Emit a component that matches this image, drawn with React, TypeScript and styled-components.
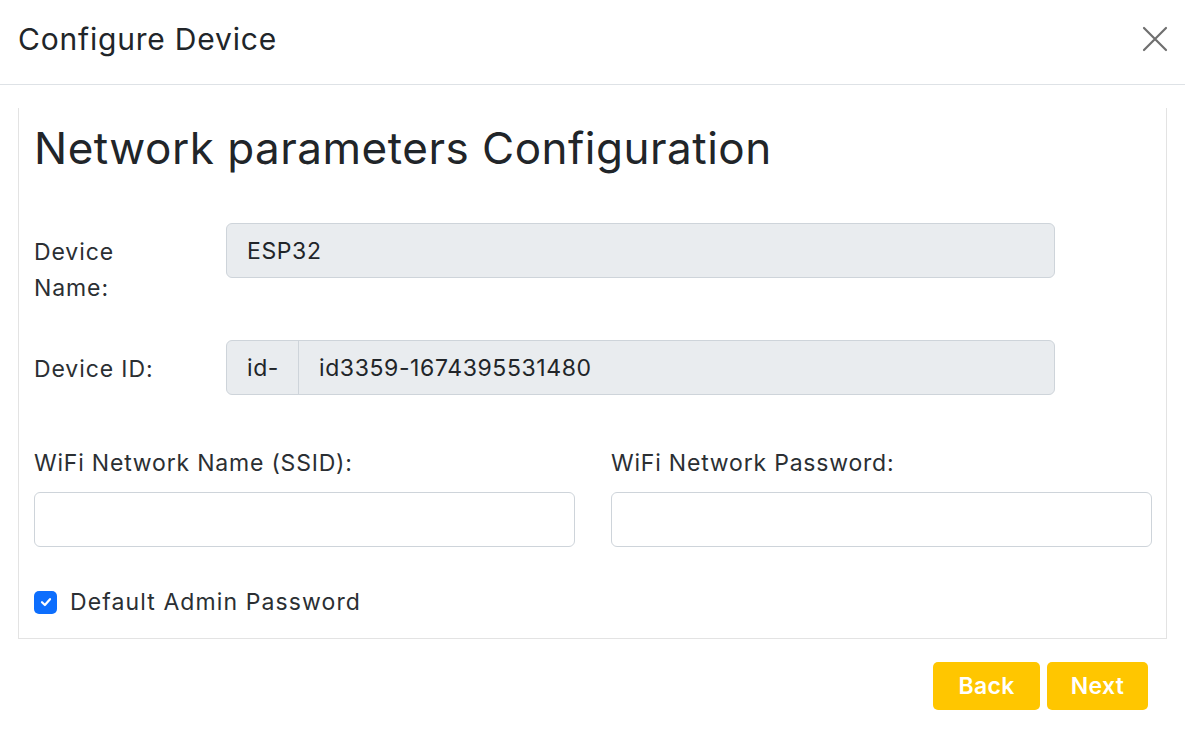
import React from "react";
import styled, { createGlobalStyle } from "styled-components";

const GlobalStyle = createGlobalStyle`
  html, body {
    margin: 0;
    padding: 0;
    background: #ffffff;
  }
  body {
    font-family: Inter, "Open Sans", sans-serif;
    color: #212529;
  }
`;

const Modal = styled.div`
  width: 1185px;
  min-height: 745px;
  background: #fff;
`;

const Header = styled.div`
  display: flex;
  align-items: center;
  justify-content: space-between;
  height: 85px;
  box-sizing: border-box;
  padding: 0 17px 6px 18px;
  border-bottom: 1px solid #dee2e6;
`;

const Title = styled.h5`
  margin: 0;
  font-size: 30px;
  font-weight: 400;
  letter-spacing: 0.8px;
  line-height: 45px;
  color: #212529;
`;

const CloseButton = styled.button`
  border: none;
  background: none;
  padding: 0;
  width: 26px;
  height: 26px;
  display: flex;
  cursor: pointer;
`;

const Body = styled.div`
  padding: 23px 18px 0 18px;
`;

const Card = styled.div`
  border: 1px solid #e3e3e3;
  border-top: none;
  padding: 13px 14px 18px 15px;
`;

const Heading = styled.h2`
  margin: 0 0 47px 0;
  font-size: 44px;
  font-weight: 400;
  letter-spacing: 0.5px;
  line-height: 55px;
  color: #212529;
`;

const Row = styled.div<{ $gap: number }>`
  display: grid;
  grid-template-columns: 192px 829px;
  align-items: start;
  margin-bottom: ${(p) => p.$gap}px;
`;

const Label = styled.label`
  display: block;
  width: 140px;
  padding-top: 11px;
  font-size: 23px;
  letter-spacing: 0.9px;
  line-height: 36px;
  color: #2b2f33;
`;

const Field = styled.div<{ $disabled?: boolean }>`
  display: flex;
  height: 55px;
  box-sizing: border-box;
  border: 1px solid #ced4da;
  border-radius: 6px;
  background: ${(p) => (p.$disabled ? "#e9ecef" : "#fff")};
  overflow: hidden;
`;

const FieldText = styled.div`
  display: flex;
  align-items: center;
  padding: 0 20px;
  font-size: 23px;
  letter-spacing: 0.6px;
  color: #212529;
`;

const Addon = styled(FieldText)`
  border-right: 1px solid #ced4da;
  width: 72px;
  box-sizing: border-box;
`;

const Columns = styled.div`
  display: grid;
  grid-template-columns: 1fr 1fr;
  column-gap: 36px;
  margin-bottom: 37px;
`;

const StackLabel = styled.label`
  display: block;
  font-size: 23px;
  letter-spacing: 0.8px;
  line-height: 36px;
  color: #2b2f33;
  margin-bottom: 11px;
`;

const CheckRow = styled.label`
  display: flex;
  align-items: center;
  gap: 13px;
  font-size: 23px;
  letter-spacing: 1.1px;
  line-height: 36px;
  color: #2b2f33;
`;

const CheckBox = styled.span`
  width: 23px;
  height: 23px;
  border-radius: 5px;
  background: #0d6efd;
  display: flex;
  align-items: center;
  justify-content: center;
`;

const Footer = styled.div`
  display: flex;
  justify-content: flex-end;
  gap: 7px;
  padding: 23px 37px 0 0;
`;

const Button = styled.button<{ $w: number }>`
  width: ${(p) => p.$w}px;
  height: 48px;
  border: none;
  border-radius: 5px;
  background: #ffc600;
  color: #fff;
  font-family: Inter, "Open Sans", sans-serif;
  font-size: 23px;
  font-weight: 600;
  letter-spacing: 0.3px;
  cursor: pointer;
`;

export default function App() {
  return (
    <Modal>
      <GlobalStyle />
      <Header>
        <Title>Configure Device</Title>
        <CloseButton aria-label="Close">
          <svg width="26" height="26" viewBox="0 0 26 26">
            <path
              d="M2 2 L24 24 M24 2 L2 24"
              stroke="#6f6f6f"
              strokeWidth="2.2"
              strokeLinecap="round"
            />
          </svg>
        </CloseButton>
      </Header>
      <Body>
        <Card>
          <Heading>Network parameters Configuration</Heading>
          <Row $gap={34}>
            <Label>Device Name:</Label>
            <Field $disabled>
              <FieldText>ESP32</FieldText>
            </Field>
          </Row>
          <Row $gap={50}>
            <Label>Device ID:</Label>
            <Field $disabled>
              <Addon>id-</Addon>
              <FieldText>id3359-1674395531480</FieldText>
            </Field>
          </Row>
          <Columns>
            <div>
              <StackLabel>WiFi Network Name (SSID):</StackLabel>
              <Field />
            </div>
            <div>
              <StackLabel>WiFi Network Password:</StackLabel>
              <Field />
            </div>
          </Columns>
          <CheckRow>
            <CheckBox>
              <svg width="14" height="14" viewBox="0 0 14 14">
                <path
                  d="M3 7.2 L5.9 10 L11 4.2"
                  fill="none"
                  stroke="#fff"
                  strokeWidth="2.2"
                  strokeLinecap="round"
                  strokeLinejoin="round"
                />
              </svg>
            </CheckBox>
            Default Admin Password
          </CheckRow>
        </Card>
      </Body>
      <Footer>
        <Button $w={107}>Back</Button>
        <Button $w={101}>Next</Button>
      </Footer>
    </Modal>
  );
}
